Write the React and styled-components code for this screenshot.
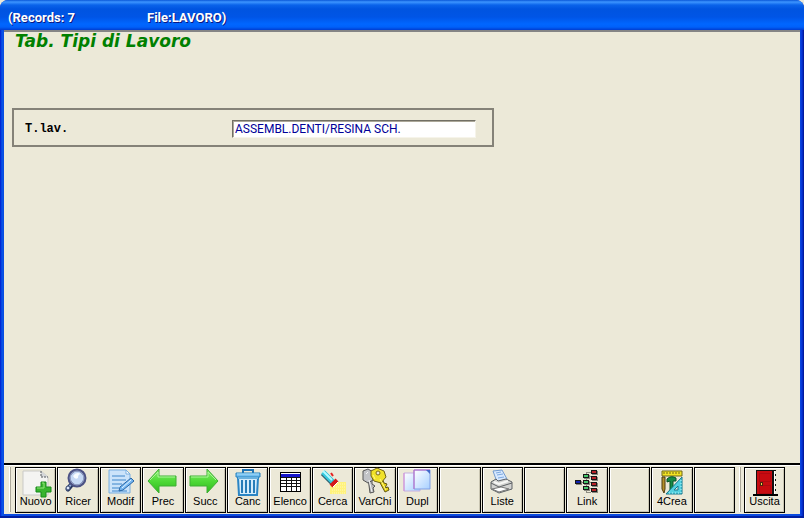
import React from "react"
import styled, { createGlobalStyle } from "styled-components"

const GlobalStyle = createGlobalStyle`
  * {
    box-sizing: border-box;
  }

  body {
    margin: 0;
    background: #ece9d8;
    font-family: "Liberation Sans", Arial, sans-serif;
  }
`

const Window = styled.div`
  display: flex;
  flex-direction: column;
  min-height: 100vh;
  padding: 0 4px 4px;
  border-radius: 8px 8px 0 0;
  background: linear-gradient(to right, #0019cf 0, #0855e8 2px, #0a4ae0 4px, #0a4ae0 calc(100% - 4px), #0433d8 calc(100% - 2px), #00138c 100%);
  box-shadow: inset 0 -2px 0 #001ea0;
`

const TitleBar = styled.header`
  display: flex;
  align-items: center;
  gap: 72px;
  height: 30px;
  margin: 0 -4px;
  padding: 4px 8px 0;
  border-radius: 8px 8px 0 0;
  background: linear-gradient(to bottom, #0a57d8 0, #3d95ff 2px, #0a63ea 5px, #0054e0 9px, #0055e6 17px, #0066ff 24px, #0061fa 27px, #003dd0 30px);
  color: #fff;
  font-family: Roboto, "Trebuchet MS", sans-serif;
  font-size: 13px;
  font-weight: 700;
  text-shadow: 1px 1px 0 #0a1883;
`

const Content = styled.main`
  flex: 1;
  padding: 0 8px;
  border-top: 2px solid #858585;
  background: #ece9d8;
`

const Heading = styled.h1`
  margin: 0 0 57px;
  padding-left: 3px;
  color: #008000;
  font-family: "DejaVu Sans", Verdana, sans-serif;
  font-size: 17px;
  font-style: italic;
  font-weight: 700;
  line-height: 19px;
`

const Panel = styled.form`
  display: flex;
  align-items: center;
  max-width: 482px;
  height: 39px;
  padding: 2px 16px 0 11px;
  border: 2px solid #858278;
`

const FieldLabel = styled.label`
  flex: 1;
  color: #000;
  font-family: "Liberation Mono", "Courier New", monospace;
  font-size: 12px;
  font-weight: 700;
`

const TextInput = styled.input`
  width: 244px;
  height: 18px;
  padding: 0 2px;
  border: 1px solid;
  border-color: #716f64 #f6f4ea #f6f4ea #716f64;
  box-shadow: inset 1px 1px 0 #aca899;
  background: #fff;
  color: #000098;
  font-family: Roboto, Arial, sans-serif;
  font-size: 12px;
  outline: none;
`

const Toolbar = styled.nav`
  display: flex;
  align-items: flex-start;
  height: 51px;
  padding: 2px 15px 0 5px;
  border-top: 2px solid #000;
  background: #ece9d8;
  box-shadow: inset 0 1px 0 #fff;
`

const Grip = styled.span`
  width: 2px;
  height: 45px;
  margin-right: ${props => props.$gap};
  border-left: 1px solid #fff;
  border-right: 1px solid #aca899;
`

const ButtonGroup = styled.div`
  display: grid;
  flex: 1;
  grid-template-columns: repeat(17, minmax(0, 1fr));
  gap: 1px;
  margin-right: 4px;
`

const ToolButton = styled.button`
  display: flex;
  flex-direction: column;
  align-items: center;
  min-width: 41px;
  height: 46px;
  padding: 0;
  border: 1px solid #000;
  background: #ece9d8;
  box-shadow: inset 1px 1px 0 #fff, inset -1px -1px 0 #c9c5b2;
  color: #000;
  font-family: inherit;
  font-size: 11px;
  line-height: 14px;
`

const Icon = styled.svg`
  flex: none;
  width: 38px;
  height: 26px;
  overflow: visible;
`

const ButtonLabel = styled.span`
  position: relative;
  white-space: nowrap;
`

const NewIcon = () => (
  <>
    <path d="M6 3H24L31 9V27H6Z" fill="#f4f4f2" stroke="#c9c9c7" />
    <path d="M24 3V9H31" fill="#d5d7d9" stroke="#55595c" strokeDasharray="2 1" />
    <path d="M24 14h5v5h5v5h-5v5h-5v-5h-5v-5h5z" fill="#38b42e" stroke="#168a19" />
    <path d="M25 15h2v5h-7" fill="none" stroke="#93e77b" />
  </>
)

const SearchIcon = () => (
  <>
    <path d="M13 16 9 21" stroke="#26365f" strokeWidth="5" strokeLinecap="round" />
    <path d="m13 15-5 7" stroke="#91a9d8" strokeWidth="2" />
    <circle cx="9" cy="20" r="2" fill="#dce6fa" stroke="#34466f" />
    <circle cx="18" cy="10" r="8" fill="#c6d9f5" stroke="#4c5284" strokeWidth="3" />
    <circle cx="18" cy="10" r="7" fill="none" stroke="#9cabcf" />
    <path d="M14 8q3-5 8-2-3 0-3 4-3 2-5-2" fill="#f8fcff" />
  </>
)

const EditIcon = () => (
  <>
    <path d="M7 2H24L28 6V25H7Z" fill="#cbe3fa" stroke="#78aee0" />
    <path d="M24 2v4h4z" fill="#fff" stroke="#78aee0" />
    <path d="M10 8h13M10 12h14M10 16h10M10 20h7M10 23h15" stroke="#3f86cb" />
    <path d="m29 10 3 3-11 9-4 1 1-4z" fill="#77b7f2" stroke="#2967a6" />
    <path d="m29 12-9 8" stroke="#e6f6ff" />
  </>
)

const arrow = "M4 13 15 1V8H32V18H15V25Z"

const ArrowGradient = ({ id }) => (
  <linearGradient id={id} x1="0" y1="0" x2="0" y2="1">
    <stop offset="0" stopColor="#8bef70" />
    <stop offset="0.5" stopColor="#4fda37" />
    <stop offset="1" stopColor="#2fb91d" />
  </linearGradient>
)

const PrevIcon = () => (
  <>
    <ArrowGradient id="prev" />
    <path d={arrow} fill="url(#prev)" stroke="#3eae35" />
    <path d="m6 12 8-8v5h17" fill="none" stroke="#a9f597" />
  </>
)

const NextIcon = () => (
  <g transform="matrix(-1 0 0 1 36 0)">
    <ArrowGradient id="next" />
    <path d={arrow} fill="url(#next)" stroke="#3eae35" />
    <path d="m6 12 8-8v5h17" fill="none" stroke="#a9f597" />
  </g>
)

const TrashIcon = () => (
  <>
    <path d="M14 5V2h10v3" fill="none" stroke="#1f73b3" strokeWidth="2" />
    <path d="M7 5h24v4H7z" fill="#75c0f0" stroke="#2580bd" />
    <path d="M9 10h20l-1 17H10z" fill="#d4edfc" stroke="#2b85c4" strokeWidth="2" />
    <path d="M13 12v13M17 12v13M21 12v13M25 12v13" stroke="#277db8" strokeWidth="2" />
    <path d="M8 6h22M9 10h20" stroke="#a9def9" />
  </>
)

const TableIcon = () => (
  <>
    <path d="M9 4h21v20H9z" fill="#000" />
    <path d="M10 5h19v18H10z" fill="#fff" />
    <path d="M10 6h19v3H10z" fill="#1515cc" />
    <path
      d="M10 9.5h19M10 12.5h19M10 15.5h19M10 18.5h19M15.5 9v14M20.5 9v14M25.5 9v14"
      stroke="#111"
      shapeRendering="crispEdges"
    />
  </>
)

const TorchIcon = () => (
  <>
    <path d="m16 18 6-4h10v12H16z" fill="#fff27c" />
    <path d="M18 16h13M18 19h13M18 22h13M18 25h13" stroke="#fff9ba" strokeDasharray="1 1" />
    <path d="m9 5 10 10" stroke="#32616f" strokeWidth="6" />
    <path d="m9 4 10 10" stroke="#36cbe0" strokeWidth="5" />
    <path d="m9 3 9 9" stroke="#b6f9ff" strokeWidth="2" />
    <path d="m17 18 6-6" stroke="#d41919" strokeWidth="4" />
    <path d="m17 5 2 3" stroke="#e52020" strokeWidth="2" />
    <path d="m19 19 5-5" stroke="#fff" />
  </>
)

const KeysIcon = () => (
  <>
    <path d="m12 10 2 15 4-1-1-4 2-2-3-2v-4" fill="#b4b5b7" stroke="#555" />
    <path d="M7 3 12 1 17 4v8l-5 3-5-3z" fill="#c2c4c7" stroke="#565656" />
    <path d="m22 11 7 13 4-2-1-3-3 1 2-4-3-1-2-5" fill="#e5d111" stroke="#625713" />
    <path d="m15 3 6-3 7 3 2 6-5 6-7-2-3-5z" fill="#f1e229" stroke="#716313" />
    <circle cx="22" cy="5" r="2" fill="#ece9d8" stroke="#7d6b14" />
    <path d="m24 11 6 11M17 7l2 4" stroke="#fff891" />
    <path d="m10 6 2-2M13 12l3 12" stroke="#f6f6f6" />
  </>
)

const PageGradient = () => (
  <linearGradient id="page" x1="0" y1="0" x2="1" y2="1">
    <stop offset="0" stopColor="#fff" />
    <stop offset="1" stopColor="#a7d0ff" />
  </linearGradient>
)

const CopyIcon = () => (
  <>
    <PageGradient />
    <path d="M6 5h16v18H6z" fill="url(#page)" stroke="#c5aee0" />
    <path d="M6 5v18" stroke="#d48dd8" />
    <path d="M16 2h16v19H16z" fill="url(#page)" stroke="#7e9fe5" />
    <path d="M16 21V2h16" fill="none" stroke="#c569c6" />
    <path d="M28 2h4v4z" fill="#4169c9" />
  </>
)

const PrintIcon = () => (
  <>
    <path d="m10 3 9-1 5 9-10 3z" fill="#d7e9ff" stroke="#729bd0" />
    <path d="m13 5 5-1M14 7l6-1M15 10l6-1" stroke="#7da9df" />
    <path d="m8 14 5-3 2 2 8-2 6 3v7l-13 4-8-4z" fill="#d3d3d1" stroke="#5e6266" />
    <path d="m8 15 8 4 13-4" fill="none" stroke="#5d6063" />
    <path d="m9 21 7 3 10-3-8-2z" fill="#fff" stroke="#777" />
    <path d="m11 14 5 2 9-3" fill="none" stroke="#f7f7f5" strokeWidth="2" />
  </>
)

const Node = ({ x, y, color }) => (
  <>
    <rect x={x + 1} y={y + 1} width="6" height="4" fill="#88877d" />
    <rect x={x} y={y} width="6" height="4" fill="#171717" />
    <rect x={x + 1} y={y + 1} width="4" height="2" fill={color} />
  </>
)

const LinkIcon = () => (
  <g shapeRendering="crispEdges">
    <path d="M13 14.5h10M18.5 6V4.5H23M21 8.5h2M21 20.5h2M18.5 22v2.5H23M18.5 10v9" fill="none" stroke="#8e8d82" />
    <Node x={7} y={12} color="#1022ae" />
    {[6, 12, 18].map(y => <Node key={y} x={15} y={y} color="#45c86a" />)}
    {[2, 8, 14, 20].map(y => <Node key={y} x={23} y={y} color="#b92328" />)}
  </g>
)

const DesignIcon = () => (
  <>
    <path d="M9 3h20v5H9z" fill="#f4e323" stroke="#6e6718" />
    <path d="M11 4v2M14 4v2M17 4v2M20 4v2M23 4v2M26 4v2" stroke="#6e6718" />
    <path d="M9 9h3v12l-1 4-2-4z" fill="#b48f28" stroke="#4d3b12" />
    <path d="M14 11q4-4 9-1v3h-3v10h-3V13l-3 1z" fill="#168a46" stroke="#075325" />
    <path fillRule="evenodd" d="M29 9v17H13zM25 18v4h-4z" fill="#52d0df" stroke="#16798e" />
    <path d="M16 25h12V12" fill="none" stroke="#b8f8fb" strokeDasharray="1 2" />
  </>
)

const DoorIcon = () => (
  <g shapeRendering="crispEdges">
    <path d="M10 2h19v25H10z" fill="#fff" stroke="#111" />
    <path d="M27 3v24" stroke="#111" strokeWidth="2" />
    <path d="M11 3h15v24H11z" fill="#c70b10" />
    <path d="M13 5h11v8H13zM13 17h11v8H13z" fill="none" stroke="#b00910" />
    <path d="M14 14h2v3h-2z" fill="#f5d84b" stroke="#4b2510" />
    <path d="M29.5 3v24" stroke="#ece9d8" strokeDasharray="3 2" />
    <path d="M7 27h25" stroke="#000" strokeWidth="2" />
  </g>
)

const tools = [
  { label: "Nuovo", icon: NewIcon },
  { label: "Ricer", icon: SearchIcon },
  { label: "Modif", icon: EditIcon },
  { label: "Prec", icon: PrevIcon },
  { label: "Succ", icon: NextIcon },
  { label: "Canc", icon: TrashIcon },
  { label: "Elenco", icon: TableIcon },
  { label: "Cerca", icon: TorchIcon },
  { label: "VarChi", icon: KeysIcon },
  { label: "Dupl", icon: CopyIcon },
  {},
  { label: "Liste", icon: PrintIcon },
  {},
  { label: "Link", icon: LinkIcon },
  {},
  { label: "4Crea", icon: DesignIcon },
  {},
]

const Tool = ({ label, icon: Drawing }) => (
  <ToolButton type="button" disabled={!label}>
    {Drawing && (
      <Icon viewBox="0 0 38 26" fill="none" aria-hidden="true">
        <Drawing />
      </Icon>
    )}
    {label && <ButtonLabel>{label}</ButtonLabel>}
  </ToolButton>
)

const App = () => (
  <>
    <GlobalStyle />
    <Window>
      <TitleBar>
        <span>(Records: 7</span>
        <span>File:LAVORO)</span>
      </TitleBar>
      <Content>
        <Heading>Tab. Tipi di Lavoro</Heading>
        <Panel onSubmit={e => e.preventDefault()}>
          <FieldLabel htmlFor="tlav">T.lav.</FieldLabel>
          <TextInput id="tlav" type="text" defaultValue="ASSEMBL.DENTI/RESINA SCH." />
        </Panel>
      </Content>
      <Toolbar>
        <Grip $gap="4px" />
        <ButtonGroup>
          {tools.map((tool, i) => <Tool key={i} {...tool} />)}
        </ButtonGroup>
        <Grip $gap="3px" />
        <Tool label="Uscita" icon={DoorIcon} />
      </Toolbar>
    </Window>
  </>
)

export default App
